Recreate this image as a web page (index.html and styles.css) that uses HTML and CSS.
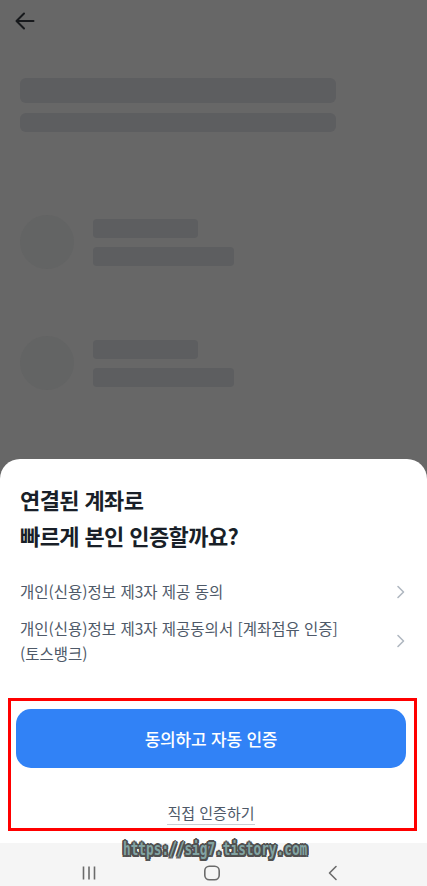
FILE: index.html
```html
<!DOCTYPE html>
<html lang="ko">
<head>
<meta charset="utf-8">
<title>본인 인증</title>
<link rel="stylesheet" href="styles.css">
</head>
<body>
<div class="screen">
  <main class="backdrop">
    <div class="topbar">
      <svg class="back" width="24" height="24" viewBox="0 0 24 24" fill="none" stroke="#17191c" stroke-width="2" stroke-linecap="round" stroke-linejoin="round"><path d="M20.5 12H4"/><path d="M11 4.5L3.5 12 11 19.5"/></svg>
    </div>
    <div class="sk-head">
      <div class="sk-bar sk-big"></div>
      <div class="sk-bar sk-mid"></div>
    </div>
    <div class="sk-row">
      <div class="sk-circle"></div>
      <div class="sk-lines">
        <div class="sk-bar sk-short"></div>
        <div class="sk-bar sk-long"></div>
      </div>
    </div>
    <div class="sk-row">
      <div class="sk-circle"></div>
      <div class="sk-lines">
        <div class="sk-bar sk-short"></div>
        <div class="sk-bar sk-long"></div>
      </div>
    </div>
  </main>
  <section class="sheet">
    <h1 class="title">연결된 계좌로<br>빠르게 본인 인증할까요?</h1>
    <ul class="terms">
      <li class="term">
        <span class="term-text">개인(신용)정보 제3자 제공 동의</span>
        <svg class="chev" width="10" height="16" viewBox="0 0 10 16" fill="none" stroke="#b0b8c1" stroke-width="1.6" stroke-linecap="round" stroke-linejoin="round"><path d="M3 2.5l5.5 5.5L3 13.5"/></svg>
      </li>
      <li class="term">
        <span class="term-text">개인(신용)정보 제3자 제공동의서 [계좌점유 인증]<br>(토스뱅크)</span>
        <svg class="chev" width="10" height="16" viewBox="0 0 10 16" fill="none" stroke="#b0b8c1" stroke-width="1.6" stroke-linecap="round" stroke-linejoin="round"><path d="M3 2.5l5.5 5.5L3 13.5"/></svg>
      </li>
    </ul>
    <div class="highlight">
      <button class="primary">동의하고 자동 인증</button>
      <div class="alt"><span class="alt-link">직접 인증하기</span></div>
    </div>
  </section>
  <nav class="navbar">
    <svg class="nav-ico" width="16" height="16" viewBox="0 0 16 16" fill="none" stroke="#6b6b6b" stroke-width="1.6"><path d="M2.5 1.5v13M8 1.5v13M13.5 1.5v13"/></svg>
    <svg class="nav-ico" width="18" height="16" viewBox="0 0 18 16" fill="none" stroke="#6b6b6b" stroke-width="1.6"><rect x="1.8" y="1.3" width="14.4" height="13.4" rx="4.5"/></svg>
    <svg class="nav-ico" width="12" height="16" viewBox="0 0 12 16" fill="none" stroke="#6b6b6b" stroke-width="1.6" stroke-linecap="round" stroke-linejoin="round"><path d="M9 1.5L2.5 8 9 14.5"/></svg>
    <span class="watermark">https://sig7.tistory.com</span>
  </nav>
</div>
</body>
</html>
```
FILE: styles.css
```css
* { box-sizing: border-box; }
html, body { margin: 0; padding: 0; }
body {
  width: 427px;
  height: 886px;
  overflow: hidden;
  background: #676767;
  font-family: "Noto Sans CJK KR", "Noto Sans", sans-serif;
}
.screen {
  width: 427px;
  height: 886px;
  display: flex;
  flex-direction: column;
  background: #676767;
}
.backdrop {
  height: 459px;
  flex: none;
  padding: 0 20px;
}
.topbar {
  height: 78px;
  padding-top: 9px;
}
.back { display: block; margin-left: -7px; }
.sk-head {
  display: flex;
  flex-direction: column;
  gap: 10px;
}
.sk-bar {
  background: #5d5e60;
  border-radius: 6px;
}
.sk-big { width: 316px; height: 25px; }
.sk-mid { width: 316px; height: 19px; }
.sk-row {
  display: flex;
  align-items: center;
  gap: 19px;
  margin-top: 83px;
}
.sk-row + .sk-row { margin-top: 67px; }
.sk-circle {
  width: 54px;
  height: 54px;
  border-radius: 50%;
  background: #636464;
}
.sk-lines {
  display: flex;
  flex-direction: column;
  gap: 9px;
}
.sk-short { width: 105px; height: 19px; border-radius: 4px; }
.sk-long { width: 141px; height: 19px; border-radius: 4px; }

.sheet {
  height: 384px;
  flex: none;
  background: #fff;
  border-radius: 20px 20px 0 0;
  padding-top: 22px;
}
.title {
  margin: 0;
  padding-left: 20px;
  font-size: 22px;
  line-height: 36px;
  font-weight: 700;
  color: #191f28;
  letter-spacing: -0.6px;
}
.terms {
  list-style: none;
  margin: 20px 0 0;
  padding: 0 20px;
}
.term {
  display: flex;
  align-items: center;
  justify-content: space-between;
  padding: 6px 0;
}
.term-text {
  font-size: 15.5px;
  line-height: 25px;
  color: #4e5968;
  letter-spacing: 0;
}
.chev { flex: none; margin-right: 2px; }
.highlight {
  margin: 26px 10px 0 8px;
  height: 133px;
  border: 3px solid #ff0000;
  padding: 8px 8px 0 5px;
}
.primary {
  display: block;
  width: 100%;
  height: 59px;
  border: 0;
  border-radius: 15px;
  background: #3182f6;
  color: #fff;
  font-family: inherit;
  font-size: 17px;
  font-weight: 500;
  letter-spacing: -0.2px;
}
.alt {
  text-align: center;
  margin-top: 32px;
}
.alt-link {
  font-size: 15px;
  line-height: 20px;
  color: #4e5968;
  border-bottom: 1px solid #c9ced4;
  padding-bottom: 1px;
}
.navbar {
  flex: 1;
  background: #f5f5f5;
  position: relative;
  display: flex;
  align-items: center;
  justify-content: space-between;
  padding: 16px 88px 0 81px;
}
.nav-ico { display: block; }
.watermark {
  position: absolute;
  left: 123px;
  top: -5px;
  font-family: "DejaVu Sans Mono", monospace;
  font-weight: 700;
  font-size: 17px;
  line-height: 22px;
  letter-spacing: 0;
  color: #82a4a3;
  transform: scaleX(0.75);
  transform-origin: 0 50%;
  text-shadow:
    2.5px 0 0 #505050, -2.5px 0 0 #505050, 0 2px 0 #505050, 0 -2px 0 #505050,
    2px 1.5px 0 #505050, -2px 1.5px 0 #505050, 2px -1.5px 0 #505050, -2px -1.5px 0 #505050;
}
```
